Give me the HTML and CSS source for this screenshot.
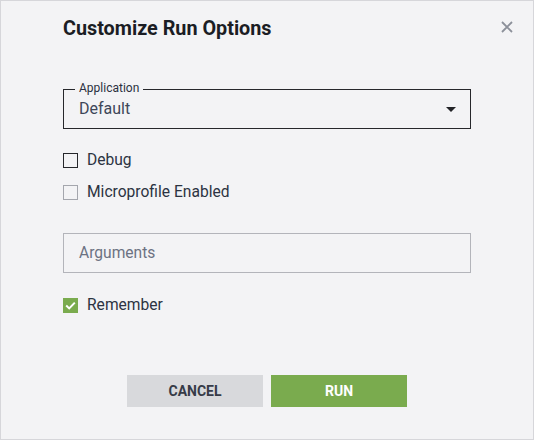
FILE: index.html
```html
<!DOCTYPE html>
<html>
<head>
<meta charset="utf-8">
<link rel="stylesheet" href="styles.css">
</head>
<body>
<div class="dialog">
  <div class="header">
    <h1 class="title">Customize Run Options</h1>
    <button class="close" aria-label="Close">
      <svg width="12" height="12" viewBox="0 0 12 12"><path d="M1 1L11 11M11 1L1 11" stroke="#8c909a" stroke-width="1.8" fill="none"/></svg>
    </button>
  </div>
  <div class="content">
    <div class="select">
      <span class="legend">Application</span>
      <span class="value">Default</span>
      <span class="arrow"></span>
    </div>
    <div class="checks">
      <label class="check"><span class="box dark"></span><span>Debug</span></label>
      <label class="check"><span class="box light"></span><span>Microprofile Enabled</span></label>
    </div>
    <div class="input"><span class="placeholder">Arguments</span></div>
    <label class="check remember"><span class="box checked"><svg width="15" height="15" viewBox="0 0 15 15"><path d="M3.2 7.6L6.2 10.4L11.8 4.6" stroke="#fff" stroke-width="2" fill="none"/></svg></span><span>Remember</span></label>
  </div>
  <div class="actions">
    <button class="btn cancel">Cancel</button>
    <button class="btn run">Run</button>
  </div>
</div>
</body>
</html>
```
FILE: styles.css
```css
* { box-sizing: border-box; }
html, body { margin: 0; padding: 0; }
body { font-family: Roboto, "Liberation Sans", sans-serif; background: #f3f3f5; }
.dialog {
  width: 534px;
  height: 440px;
  border: 1px solid #d6d6da;
  background: #f3f3f5;
  padding: 16px 21px 0 62px;
}
.header {
  display: flex;
  justify-content: space-between;
  align-items: flex-start;
}
.title {
  margin: 0;
  font-size: 19.8px;
  line-height: 24px;
  font-weight: 700;
  color: #1b1d24;
}
.close {
  border: 0;
  background: none;
  padding: 0;
  margin-top: 4px;
  margin-right: -1px;
  width: 12px;
  height: 12px;
  display: block;
}
.close svg { display: block; }
.content { width: 408px; }
.select {
  position: relative;
  margin-top: 48px;
  height: 40px;
  border: 1px solid #26272b;
  display: flex;
  align-items: center;
  justify-content: space-between;
  padding: 0 14px 0 15px;
}
.legend {
  position: absolute;
  left: 11px;
  top: -9px;
  padding: 0 4px;
  background: #f3f3f5;
  font-size: 12px;
  line-height: 14px;
  color: #2a3040;
}
.value { font-size: 16px; line-height: 20px; color: #3e4759; }
.arrow {
  width: 0; height: 0;
  border-left: 5px solid transparent;
  border-right: 5px solid transparent;
  border-top: 5px solid #222327;
}
.checks {
  margin-top: 19px;
  display: flex;
  flex-direction: column;
  gap: 8px;
}
.check {
  display: flex;
  align-items: center;
  height: 24px;
  font-size: 15.6px;
  color: #2c3342;
}
.box {
  width: 15px;
  height: 15px;
  margin-right: 9px;
  display: flex;
}
.box.dark { border: 1.5px solid #26272b; }
.box.light { border: 1.5px solid #a4a6ad; }
.box.checked { background: #7aab4e; }
.input {
  margin-top: 29px;
  height: 40px;
  border: 1px solid #b3b4ba;
  display: flex;
  align-items: center;
  padding: 0 15px;
}
.placeholder { font-size: 15.6px; color: #6c7282; }
.remember { margin-top: 20px; }
.actions {
  margin-top: 58px;
  margin-left: -62px;
  margin-right: -21px;
  display: flex;
  justify-content: center;
  gap: 8px;
}
.btn {
  width: 136px;
  height: 32px;
  border: 0;
  font-family: Roboto, "Liberation Sans", sans-serif;
  font-size: 14px;
  font-weight: 700;
  text-transform: uppercase;
}
.cancel { background: #d8d9dc; color: #363b47; }
.run { background: #7aab4e; color: #fff; }
```
